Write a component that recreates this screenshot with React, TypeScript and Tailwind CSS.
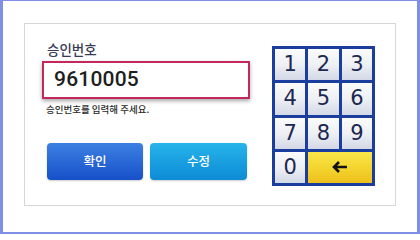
import React from "react";

const keys = ["1", "2", "3", "4", "5", "6", "7", "8", "9"];

const font = { fontFamily: "Roboto, 'Noto Sans CJK KR', sans-serif" };

function Key({ label }: { label: string }) {
  return (
    <div className="flex items-center justify-center bg-gradient-to-b from-[#fbfbfb] via-[#eef0f4] to-[#d3d8e6] text-[21px] leading-none text-[#1c2752] font-['DejaVu_Sans',sans-serif]">
      {label}
    </div>
  );
}

export default function App() {
  return (
    <div
      className="w-[420px] h-[234px] bg-white border-l-[3px] border-r-[3px] border-t border-b-[2px] border-[#7f8ee6] pl-[21px] pt-[22px]"
      style={font}
    >
      <div className="w-[372px] h-[183px] border border-[#d6d6d6] flex">
        <div className="flex flex-col pl-[17px] pt-[16px] w-[226px]">
          <div className="pl-[5px] text-[13.5px] leading-[18px] font-medium text-[#363a56] font-['Noto_Sans_CJK_KR',sans-serif]">
            승인번호
          </div>
          <div className="mt-[3px] h-[38px] w-[208px] border-2 border-[#c3275c] bg-white shadow-[0_2px_4px_rgba(0,0,0,0.35)] flex items-center pl-[10px]">
            <span className="text-[21px] font-medium text-[#1e1e1e] font-['Roboto',sans-serif] tracking-[0.2px]">
              9610005
            </span>
          </div>
          <div className="mt-[3px] pl-[4px] text-[9.5px] leading-[14px] font-medium text-[#2a2a2a] font-['Noto_Sans_CJK_KR',sans-serif]">
            승인번호를 입력해 주세요.
          </div>
          <div className="mt-[27px] pl-[5px] flex gap-[7px] font-['Noto_Sans_CJK_KR',sans-serif]">
            <button className="w-[96px] h-[37px] rounded-[4px] bg-gradient-to-b from-[#3d80e2] via-[#2a68d6] to-[#1650c8] text-white text-[12.5px] font-medium shadow-[0_1px_2px_rgba(0,0,0,0.2)]">
              확인
            </button>
            <button className="w-[97px] h-[37px] rounded-[4px] bg-gradient-to-b from-[#28b4ea] via-[#199fe0] to-[#0e8bd6] text-white text-[12.5px] font-medium shadow-[0_1px_2px_rgba(0,0,0,0.2)]">
              수정
            </button>
          </div>
        </div>
        <div className="ml-[21px] mt-[22px] w-[103px] h-[140px] bg-[#1b3d9e] p-[3px] grid grid-cols-3 grid-rows-4 gap-[3px]">
          {keys.map((k) => (
            <Key key={k} label={k} />
          ))}
          <Key label="0" />
          <div className="col-span-2 flex items-center justify-center bg-gradient-to-b from-[#f9e64a] via-[#f4d52e] to-[#eebf1c]">
            <svg width="18" height="14" viewBox="0 0 18 14">
              <path
                d="M16 7H3M8 2L3 7l5 5"
                fill="none"
                stroke="#111"
                strokeWidth="2.6"
                strokeLinecap="butt"
                strokeLinejoin="miter"
              />
            </svg>
          </div>
        </div>
      </div>
    </div>
  );
}
